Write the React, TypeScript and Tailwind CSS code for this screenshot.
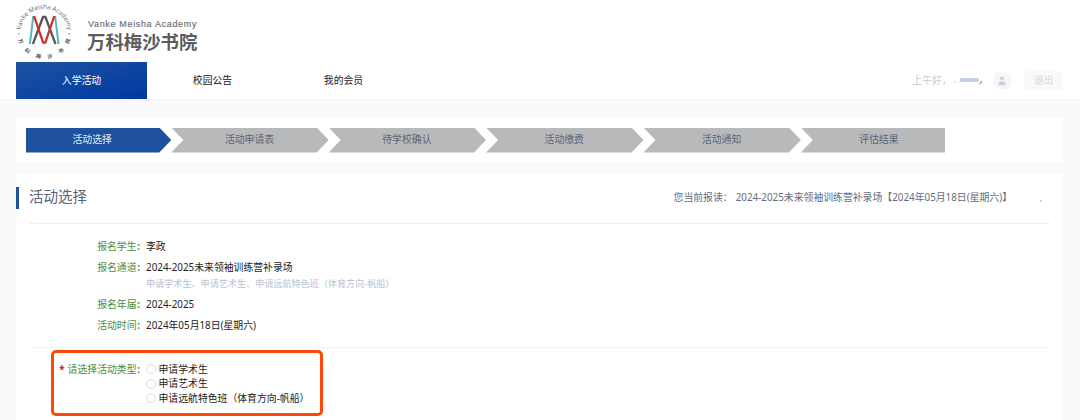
import React from 'react'

interface InfoRow {
  label: string
  value: string
  hint?: string
}

const navItems = ['入学活动', '校园公告', '我的会员']

const steps = ['活动选择', '活动申请表', '待学校确认', '活动缴费', '活动通知', '评估结果']

const infoRows: InfoRow[] = [
  { label: '报名学生', value: '李政' },
  {
    label: '报名通道',
    value: '2024-2025未来领袖训练营补录场',
    hint: '申请学术生、申请艺术生、申请远航特色班（体育方向-帆船）'
  },
  { label: '报名年届', value: '2024-2025' },
  { label: '活动时间', value: '2024年05月18日(星期六)' }
]

const activityTypes = ['申请学术生', '申请艺术生', '申请远航特色班（体育方向-帆船）']

// Characters along the lower half of the seal, with their angle from the top
const sealChars = [
  { char: '万', angle: 248 },
  { char: '科', angle: 221 },
  { char: '梅', angle: 193 },
  { char: '沙', angle: 167 },
  { char: '书', angle: 139 },
  { char: '院', angle: 112 }
]

function Seal() {
  return (
    <svg width="60" height="62" viewBox="0 0 60 62" fill="none" className="shrink-0">
      <path id="seal-arc" d="M6.6 30.4 A23.7 23.7 0 0 1 53.8 30.4" />
      <text fontSize="6.4" fill="#77777b" fontFamily="Noto Sans, sans-serif">
        <textPath href="#seal-arc" startOffset="0.5" textLength="69">Vanke Meisha Academy</textPath>
      </text>
      <circle cx="4.9" cy="33.8" r="0.8" fill="#77777b" />
      <circle cx="55.3" cy="33.8" r="0.8" fill="#77777b" />
      {sealChars.map(item => {
        const rad = (item.angle * Math.PI) / 180
        const x = 30.2 + 25.4 * Math.sin(rad)
        const y = 31.6 - 25.4 * Math.cos(rad)
        return (
          <text
            key={item.char}
            x={x}
            y={y + 1.9}
            transform={`rotate(${item.angle - 180} ${x} ${y})`}
            textAnchor="middle"
            fontSize="5.2"
            fontWeight="700"
            fill="#55565b"
            fontFamily="Noto Sans CJK SC, sans-serif"
          >
            {item.char}
          </text>
        )
      })}
      <path d="M19.3 16 L15.9 44 M41.1 16 L44.5 44" stroke="#57b3bd" strokeWidth="2" />
      <path d="M18.9 44 L29 17 H31.4 L41.5 44" stroke="#58595e" strokeWidth="2.3" />
      <path d="M20.1 16 L29.1 42.6 H31.3 L40.3 16" stroke="#cf3028" strokeWidth="2.3" />
    </svg>
  )
}

function Brand() {
  return (
    <div className="flex h-[62px] pl-[14px]">
      <Seal />
      <div className="pt-[18px] pl-[13px]">
        <p className="ml-px w-[112px] whitespace-nowrap font-['Liberation_Sans'] text-[9px] leading-[12px] tracking-[0.66px] text-[#6c6c71] [-webkit-text-stroke:0.15px_#6c6c71]">
          Vanke Meisha Academy
        </p>
        <h1 className="whitespace-nowrap text-[18.4px] leading-[24px] font-bold text-[#5b5c61]">万科梅沙书院</h1>
      </div>
    </div>
  )
}

function Header() {
  return (
    <header className="h-[99px] bg-white shadow-[0_1px_3px_rgba(0,0,0,0.04)]">
      <Brand />
      <div className="flex h-[37px] items-stretch justify-between pr-[17px] pl-4">
        <nav className="flex">
          {navItems.map((item, index) => (
            <a
              key={item}
              className={
                index === 0
                  ? 'flex w-[131px] items-center justify-center bg-linear-to-br from-[#1e52a0] to-[#0138a2] pb-px text-white'
                  : 'flex w-[131px] items-center justify-center pb-px text-[#222222]'
              }
            >
              {item}
            </a>
          ))}
        </nav>
        <div className="flex items-center text-[#c5cad6]">
          <span className="pb-px">上午好，</span>
          {/* Masked user name */}
          <span className="ml-[2px] flex h-[7px] w-[29px] items-start pt-px">
            <span className="mt-[3px] mr-[2px] size-[2px] bg-[#e2e8f3]" />
            <span className="mt-[3px] mr-[1px] size-[2px] bg-[#d5deee]" />
            <span className="h-[4px] w-[19px] bg-[#c5d2e8]" />
            <svg width="4" height="5" viewBox="0 0 4 5" className="mt-[2px]">
              <path d="M2.4 0.6 L2.4 2 L0.6 4.2" stroke="#6f93cf" strokeWidth="1.1" fill="none" />
            </svg>
          </span>
          <span className="ml-[10px] flex size-[19px] items-center justify-center rounded-full bg-[#f7f7f7]">
            <svg width="8" height="10" viewBox="0 0 8 10" fill="#c8d0e1">
              <circle cx="4" cy="2.5" r="2" />
              <path d="M0.3 9.2 V7.8 Q0.3 5.4 2.6 5.4 H5.4 Q7.7 5.4 7.7 7.8 V9.2 Z" />
            </svg>
          </span>
          <button className="ml-[12.4px] h-[19px] w-[39px] rounded-[2px] bg-[#f9f9f9] pb-px text-center leading-[17px] text-[#d4d8e1]">
            退出
          </button>
        </div>
      </div>
    </header>
  )
}

function StepBar() {
  const stepClass = (index: number) => {
    if (index === 0) {
      return 'w-[145.3px] bg-[#1e519e] text-[#e4eaf4] pr-[13px] [clip-path:polygon(0_0,calc(100%-12px)_0,100%_50%,calc(100%-12px)_100%,0_100%)]'
    }
    if (index === steps.length - 1) {
      return 'w-[144.3px] bg-[#b8b9bb] pl-[12px] text-[#5d6477] [clip-path:polygon(0_0,100%_0,100%_100%,0_100%,12px_50%)]'
    }
    return 'w-[157.4px] bg-[#b8b9bb] pr-px text-[#5d6477] [clip-path:polygon(0_0,calc(100%-12px)_0,100%_50%,calc(100%-12px)_100%,0_100%,12px_50%)]'
  }

  return (
    <section className="flex h-[44px] items-center bg-white px-[10px]">
      {steps.map((step, index) => (
        <div key={step} className={`flex h-[25px] shrink-0 items-center justify-center pb-[2px] ${stepClass(index)}`}>
          {step}
        </div>
      ))}
    </section>
  )
}

export default function App() {
  return (
    <div className="h-[420px] w-[1080px] overflow-hidden bg-[#fafafa] font-['Noto_Sans','Noto_Sans_CJK_SC',sans-serif] text-[9.85px] leading-[15px] text-[#222222]">
      <Header />

      <main className="flex flex-col gap-[12px] pt-[19px] pr-[17px] pl-4">
        <StepBar />

        <section className="h-[260px] bg-white">
          {/* Title */}
          <div className="flex h-[49px] items-start justify-between pt-[13px]">
            <h2 className="h-[22px] border-l-[3px] border-[#1e519e] pl-[10px] text-[14.5px] leading-[19px] text-[#5b6378]">活动选择</h2>
            <div className="flex items-center pr-[21px] leading-[20px] text-[#646b7e]">
              <span>您当前报读：</span>
              <span className="ml-[3px]">2024-2025未来领袖训练营补录场【2024年05月18日(星期六)】</span>
              <span className="mt-[7px] ml-[28px] size-[2px] bg-[#c6d8f1]" />
            </div>
          </div>

          {/* Application info */}
          <div className="mx-[13px] h-[124px] border-t border-[#f0f0f0] pt-[14.5px]">
            {infoRows.map(row => (
              <div key={row.label} className="mb-[6px] flex">
                <div className="w-[111px] shrink-0 text-right text-[#4d8c3c]">
                  {row.label}<b className="ml-[0.7px]">:</b>
                </div>
                <div className="pl-[6px]">
                  <p>{row.value}</p>
                  {row.hint && <p className="pt-[2px] text-[9.1px] leading-[14px] text-[#bac2d2]">{row.hint}</p>}
                </div>
              </div>
            ))}
          </div>

          {/* Activity type */}
          <div className="mx-[13px] border-t border-[#f4f4f4] pt-[2px]">
            <div className="ml-[22px] flex h-[66px] w-[272px] rounded-[5px] border-[3px] border-[#fb4708] pt-[9px]">
              <div className="w-[86px] shrink-0 text-right text-[#4d8c3c]">
                <b className="mr-[3px] text-[#e60012]">*</b>请选择活动类型<b className="ml-[0.7px]">:</b>
              </div>
              <div className="pl-[6px]">
                {activityTypes.map(type => (
                  <label key={type} className="flex h-[14.5px] items-center whitespace-nowrap">
                    <input type="radio" name="activityType" className="mr-[2.5px] size-[10px] shrink-0 appearance-none rounded-full border border-[#dedede] bg-white" />
                    {type}
                  </label>
                ))}
              </div>
            </div>
          </div>
        </section>
      </main>
    </div>
  )
}
